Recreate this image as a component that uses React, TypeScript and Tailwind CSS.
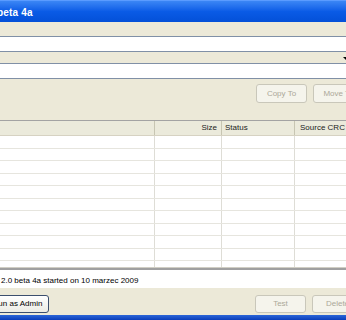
import React from "react";

const font = { fontFamily: '"Liberation Sans", Arial, sans-serif' };

function DisabledButton({ label }: { label: string }) {
  return (
    <div className="shrink-0 w-[51px] h-[19px] rounded-[3px] border border-[#C9C7BA] bg-[#F5F4EC] flex items-center justify-center text-[8px] leading-none text-[#ACA899]">
      {label}
    </div>
  );
}

function Row({ last }: { last?: boolean }) {
  return (
    <div className={"flex shrink-0 h-[12.5px] " + (last ? "" : "border-b border-[#E6E5DE]")}>
      <div className="w-[155px] shrink-0 border-r border-[#DEDDD6]" />
      <div className="w-[67px] shrink-0 border-r border-[#DEDDD6]" />
      <div className="w-[73px] shrink-0 border-r border-[#DEDDD6]" />
      <div className="flex-1" />
    </div>
  );
}

export default function App() {
  const rows = Array.from({ length: 11 });
  return (
    <div className="w-[346px] h-[320px] overflow-hidden bg-[#ECE9D8] flex flex-col" style={font}>
      {/* Title bar */}
      <div className="h-[22px] shrink-0 bg-gradient-to-b from-[#3B86F5] via-[#0A5BE6] to-[#0450D8] border-t border-[#5A9BFF] flex items-start pt-[7px]">
        <span className="ml-[-3px] text-white font-bold text-[10px] leading-none tracking-[0.2px]">beta 4a</span>
      </div>
      {/* Menu area */}
      <div className="h-[14px] shrink-0 bg-[#ECE9D8]" />
      <div className="h-px shrink-0 bg-[#8090A6]" />
      <div className="h-[14px] shrink-0 bg-white" />
      <div className="h-px shrink-0 bg-[#8090A6]" />
      <div className="h-[11px] shrink-0 bg-[#ECE9D8] flex items-center justify-end">
        <svg width="4" height="4" viewBox="0 0 4 4" className="mr-[-1px] mt-[2px]">
          <polygon points="0,0 4,0 4,4" fill="#000" />
        </svg>
      </div>
      <div className="h-px shrink-0 bg-[#8090A6]" />
      <div className="h-[14px] shrink-0 bg-white" />
      <div className="h-px shrink-0 bg-[#8090A6]" />
      {/* Toolbar */}
      <div className="h-[41px] shrink-0 bg-[#ECE9D8] flex items-start justify-end gap-[6px] pt-[5px] mr-[-18px]">
        <DisabledButton label="Copy To" />
        <DisabledButton label="Move To" />
      </div>
      {/* List view */}
      <div className="h-px shrink-0 bg-[#A3A3A3]" />
      <div className="h-[15px] shrink-0 flex bg-[#EBEADB] border-b border-[#D6D2C2] text-[8px] leading-none text-[#222]">
        <div className="w-[155px] shrink-0 border-r border-[#C7C5B2]" />
        <div className="w-[67px] shrink-0 border-r border-[#C7C5B2] flex items-center justify-end pr-[4px]">Size</div>
        <div className="w-[73px] shrink-0 border-r border-[#C7C5B2] flex items-center pl-[3px]">Status</div>
        <div className="flex-1 flex items-center pl-[5px] whitespace-nowrap">Source CRC</div>
      </div>
      <div className="h-[131px] shrink-0 bg-white overflow-hidden flex flex-col">
        {rows.map((_, i) => (
          <Row key={i} last={i === rows.length - 1} />
        ))}
      </div>
      <div className="h-px shrink-0 bg-[#D0CEC4]" />
      <div className="h-[2px] shrink-0 bg-[#A0A0A0]" />
      {/* Status text */}
      <div className="h-[18px] shrink-0 bg-white flex items-end pb-[3px] text-[8px] leading-none text-black whitespace-nowrap">
        <span className="ml-[1px]">2.0 beta 4a started on 10 marzec 2009</span>
      </div>
      {/* Bottom buttons */}
      <div className="h-[27px] shrink-0 bg-[#ECE9D8] flex items-start pt-[7px]">
        <div className="ml-[-14px] w-[63px] h-[18px] shrink-0 rounded-[3px] border border-[#3C4F6E] bg-gradient-to-b from-[#FFFFFF] to-[#ECEBE4] flex items-center justify-center text-[8px] leading-none text-black">
          Run as Admin
        </div>
        <div className="flex-1" />
        <div className="flex gap-[6px] mr-[-17px]">
          <div className="shrink-0 w-[51px] h-[18px] rounded-[3px] border border-[#C9C7BA] bg-[#F5F4EC] flex items-center justify-center text-[8px] leading-none text-[#ACA899]">Test</div>
          <div className="shrink-0 w-[51px] h-[18px] rounded-[3px] border border-[#C9C7BA] bg-[#F5F4EC] flex items-center justify-center text-[8px] leading-none text-[#ACA899]">Delete</div>
        </div>
      </div>
      {/* Bottom frame */}
      <div className="flex-1 bg-gradient-to-b from-[#2C66D8] to-[#0A3DBA]" />
    </div>
  );
}
